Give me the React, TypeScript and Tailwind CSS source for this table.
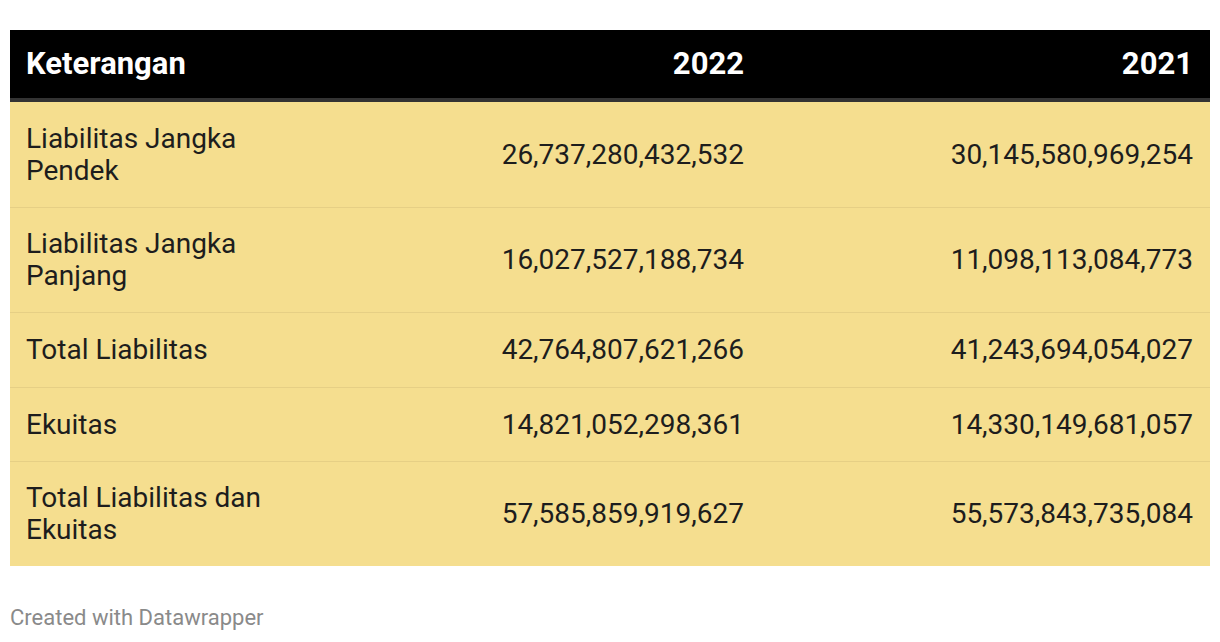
const rows = [
  { label: 'Liabilitas Jangka Pendek', y2022: '26,737,280,432,532', y2021: '30,145,580,969,254', h: 'h-[106px]' },
  { label: 'Liabilitas Jangka Panjang', y2022: '16,027,527,188,734', y2021: '11,098,113,084,773', h: 'h-[105px]' },
  { label: 'Total Liabilitas', y2022: '42,764,807,621,266', y2021: '41,243,694,054,027', h: 'h-[75px]' },
  { label: 'Ekuitas', y2022: '14,821,052,298,361', y2021: '14,330,149,681,057', h: 'h-[74px]' },
  { label: 'Total Liabilitas dan Ekuitas', y2022: '57,585,859,919,627', y2021: '55,573,843,735,084', h: 'h-[104px]' },
];

export default function App() {
  return (
    <div className="w-[1220px] h-[642px] bg-white px-[10px] pt-[30px] font-['Roboto',sans-serif]">
      <div className="w-[1200px]">
        <div className="grid grid-cols-[300px_451px_449px] bg-black h-[68px] items-center border-b-4 border-[#333333] box-content text-white font-bold text-[31px]">
          <div className="pl-[16px]">Keterangan</div>
          <div className="text-right pr-[17px]">2022</div>
          <div className="text-right pr-[17px]">2021</div>
        </div>
        {rows.map((r, i) => (
          <div
            key={r.label}
            className={`grid grid-cols-[300px_451px_449px] items-center bg-[#f5de8f] text-[#1d1d1d] text-[28px] leading-[32px] ${
              i < rows.length - 1 ? 'border-b border-[#e6cf85]' : ''
            } ${r.h}`}
          >
            <div className="pl-[16px] pr-[20px]">{r.label}</div>
            <div className="text-right pr-[17px]">{r.y2022}</div>
            <div className="text-right pr-[17px]">{r.y2021}</div>
          </div>
        ))}
        <div className="mt-[38px] text-[22px] leading-[28px] text-[#8a8a8a]">Created with Datawrapper</div>
      </div>
    </div>
  );
}
